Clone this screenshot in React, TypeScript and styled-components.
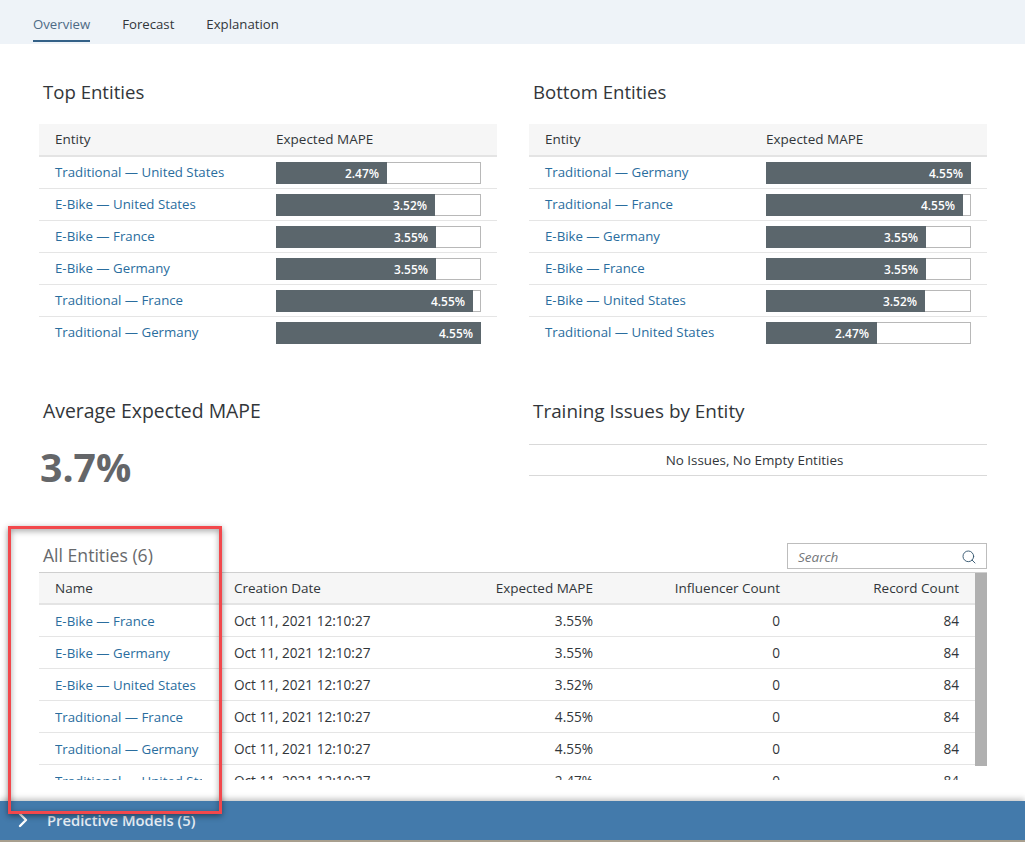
import React from "react";
import styled, { createGlobalStyle } from "styled-components";
import { Search, ChevronRight } from "lucide-react";

const Global = createGlobalStyle`
  html, body { margin: 0; padding: 0; background: #fff; }
  body { font-family: "Open Sans", "Noto Sans", "Liberation Sans", sans-serif; color: #32363a; }
  * { box-sizing: border-box; }
`;

const Page = styled.div`
  position: relative;
  width: 1025px;
  height: 842px;
  overflow: hidden;
  display: flex;
  flex-direction: column;
  background: #fff;
`;

const TabBar = styled.div`
  height: 44px;
  flex: none;
  display: flex;
  gap: 32px;
  padding-left: 33px;
  background: #eef3f8;
`;

const Tab = styled.div<{ $active?: boolean }>`
  height: 42px;
  padding-top: 15px;
  font-size: 13.2px;
  line-height: 19px;
  color: ${(p) => (p.$active ? "#4d6a85" : "#32363a")};
  border-bottom: 2px solid ${(p) => (p.$active ? "#346187" : "transparent")};
`;

const Content = styled.div`
  flex: 1;
  min-height: 0;
  padding: 34px 38px 0 39px;
  display: flex;
  flex-direction: column;
`;

const Columns = styled.div`
  display: grid;
  grid-template-columns: 458px 458px;
  column-gap: 32px;
`;

const Title = styled.h2<{ $size?: number }>`
  margin: 0;
  padding-left: 4px;
  font-size: ${(p) => p.$size ?? 18.6}px;
  line-height: 28px;
  font-weight: 400;
  color: #32363a;
  white-space: nowrap;
`;

const MiniTable = styled.div`
  margin-top: 18px;
`;

const MiniHead = styled.div`
  height: 33px;
  display: grid;
  grid-template-columns: 221px 1fr;
  align-items: center;
  padding: 0 0 2px 16px;
  background: #f6f6f6;
  border-bottom: 2px solid #e4e4e4;
  font-size: 13.5px;
`;

const MiniRow = styled.div`
  height: 32px;
  display: grid;
  grid-template-columns: 221px 205px;
  align-items: center;
  padding-left: 16px;
  border-bottom: 1px solid #e5e5e5;

  &:last-child {
    border-bottom: none;
  }
`;

const EntityLink = styled.span`
  display: block;
  font-size: 13.25px;
  color: #2a6d9e;
  white-space: nowrap;
`;

const MiniLink = styled(EntityLink)`
  margin-bottom: 2px;
`;

const ClippedLink = styled(EntityLink)`
  max-width: 151px;
  overflow: hidden;
`;

const Bar = styled.div`
  height: 22px;
  border: 1px solid #b8b8b8;
  background: #fff;
  position: relative;
`;

const BarFill = styled.div`
  position: absolute;
  top: -1px;
  bottom: -1px;
  left: -1px;
  background: #5b666c;
  color: #fff;
  font-size: 11.9px;
  font-weight: 600;
  line-height: 22px;
  text-align: right;
  padding-right: 8px;
`;

const KpiSection = styled(Columns)`
  margin-top: 48px;
`;

const KpiValue = styled.div`
  margin-top: 17px;
  padding-left: 1px;
  font-size: 39.2px;
  line-height: 50px;
  font-weight: 700;
  color: #646669;
`;

const IssueBox = styled.div`
  margin-top: 19px;
  height: 32px;
  padding-right: 7px;
  border-top: 1px solid #d9d9d9;
  border-bottom: 1px solid #d9d9d9;
  display: flex;
  align-items: center;
  justify-content: center;
  font-size: 13.4px;
`;

const ToolbarRow = styled.div`
  height: 29px;
  margin-top: 51px;
  padding-left: 4px;
  display: flex;
  align-items: flex-start;
  justify-content: space-between;
`;

const CountTitle = styled.div`
  font-size: 17.6px;
  line-height: 24px;
  color: #67696c;
`;

const SearchBox = styled.div`
  width: 200px;
  height: 26px;
  border: 1px solid #bdbdbd;
  display: flex;
  align-items: center;
  justify-content: space-between;
  padding: 1px 9px 0 10px;
  font-size: 13.5px;
  font-style: italic;
  color: #74777a;
`;

const BigTable = styled.div`
  height: 208px;
  overflow: hidden;
  position: relative;
  border-top: 1px solid #cfcfcf;
  padding-right: 12px;
`;

const ScrollThumb = styled.div`
  position: absolute;
  top: 0;
  right: 0;
  width: 12px;
  height: 193px;
  background: #b0b0b0;
`;

const BigRow = styled.div<{ $head?: boolean }>`
  height: 32px;
  flex: none;
  display: grid;
  grid-template-columns: 179px 212px 179px 187px 179px;
  align-items: center;
  font-size: ${(p) => (p.$head ? "13.5px" : "13.6px")};
  background: ${(p) => (p.$head ? "#f6f6f6" : "#fff")};
  border-bottom: ${(p) => (p.$head ? "2px solid #e4e4e4" : "1px solid #e5e5e5")};
`;

const Cell = styled.div<{ $right?: boolean }>`
  padding: 0 16px;
  white-space: nowrap;
  overflow: hidden;
  text-align: ${(p) => (p.$right ? "right" : "left")};
`;

const Footer = styled.div`
  height: 41px;
  flex: none;
  display: flex;
  align-items: center;
  gap: 12px;
  padding: 0 0 2px 11px;
  background: #437aab;
  border-bottom: 2px solid #a89f8e;
  box-shadow: 0 -2px 6px rgba(0, 0, 0, 0.25);
  color: #e6edf4;
  font-size: 14.8px;
  font-weight: 600;
`;

const Callout = styled.div`
  position: absolute;
  left: 8px;
  top: 526px;
  width: 214px;
  height: 288px;
  border: 3px solid #f2484c;
  box-shadow: 0 2px 6px rgba(0, 0, 0, 0.45), inset 0 2px 6px rgba(0, 0, 0, 0.35);
  pointer-events: none;
`;

const top = [
  ["Traditional — United States", 2.47, 111],
  ["E-Bike — United States", 3.52, 159],
  ["E-Bike — France", 3.55, 160],
  ["E-Bike — Germany", 3.55, 160],
  ["Traditional — France", 4.55, 197],
  ["Traditional — Germany", 4.55, 205],
] as const;

const bottom = [
  ["Traditional — Germany", 4.55, 205],
  ["Traditional — France", 4.55, 197],
  ["E-Bike — Germany", 3.55, 160],
  ["E-Bike — France", 3.55, 160],
  ["E-Bike — United States", 3.52, 159],
  ["Traditional — United States", 2.47, 111],
] as const;

const all = [
  ["E-Bike — France", "3.55%"],
  ["E-Bike — Germany", "3.55%"],
  ["E-Bike — United States", "3.52%"],
  ["Traditional — France", "4.55%"],
  ["Traditional — Germany", "4.55%"],
  ["Traditional — United States", "2.47%"],
];

function EntityTable({ rows }: { rows: readonly (readonly [string, number, number])[] }) {
  return (
    <MiniTable>
      <MiniHead>
        <span>Entity</span>
        <span>Expected MAPE</span>
      </MiniHead>
      {rows.map(([name, value, width]) => (
        <MiniRow key={name}>
          <MiniLink>{name}</MiniLink>
          <Bar>
            <BarFill style={{ width }}>{value.toFixed(2)}%</BarFill>
          </Bar>
        </MiniRow>
      ))}
    </MiniTable>
  );
}

export default function App() {
  return (
    <Page>
      <Global />
      <TabBar>
        <Tab $active>Overview</Tab>
        <Tab>Forecast</Tab>
        <Tab>Explanation</Tab>
      </TabBar>
      <Content>
        <Columns>
          <div>
            <Title>Top Entities</Title>
            <EntityTable rows={top} />
          </div>
          <div>
            <Title>Bottom Entities</Title>
            <EntityTable rows={bottom} />
          </div>
        </Columns>
        <KpiSection>
          <div>
            <Title $size={19.4}>Average Expected MAPE</Title>
            <KpiValue>3.7%</KpiValue>
          </div>
          <div>
            <Title $size={18.9}>Training Issues by Entity</Title>
            <IssueBox>No Issues, No Empty Entities</IssueBox>
          </div>
        </KpiSection>
        <ToolbarRow>
          <CountTitle>All Entities (6)</CountTitle>
          <SearchBox>
            Search
            <Search size={16} strokeWidth={1.4} color="#35566f" />
          </SearchBox>
        </ToolbarRow>
        <BigTable>
          <BigRow $head>
            <Cell>Name</Cell>
            <Cell>Creation Date</Cell>
            <Cell $right>Expected MAPE</Cell>
            <Cell $right>Influencer Count</Cell>
            <Cell $right>Record Count</Cell>
          </BigRow>
          {all.map(([name, mape]) => (
            <BigRow key={name}>
              <Cell>
                <ClippedLink>{name}</ClippedLink>
              </Cell>
              <Cell>Oct 11, 2021 12:10:27</Cell>
              <Cell $right>{mape}</Cell>
              <Cell $right>0</Cell>
              <Cell $right>84</Cell>
            </BigRow>
          ))}
          <ScrollThumb />
        </BigTable>
      </Content>
      <Footer>
        <ChevronRight size={24} strokeWidth={2.4} color="#fff" />
        Predictive Models (5)
      </Footer>
      <Callout />
    </Page>
  );
}
